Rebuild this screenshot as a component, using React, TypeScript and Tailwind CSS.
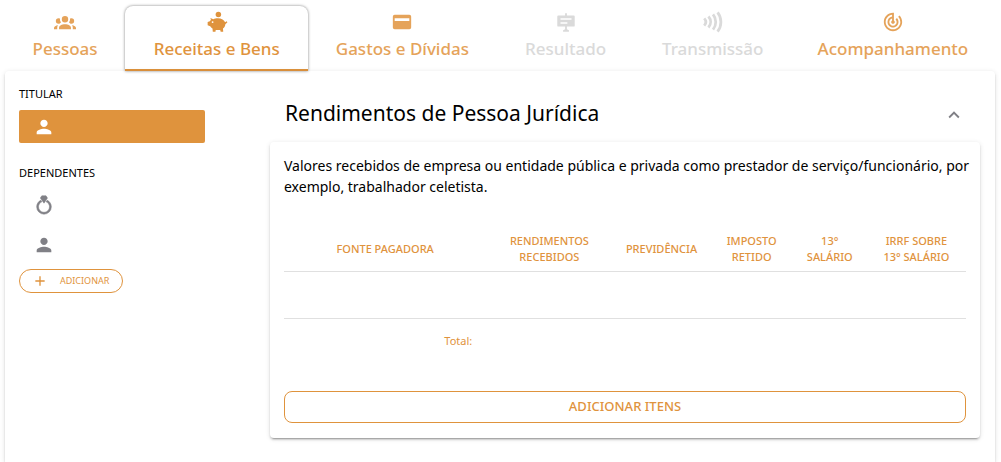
import { useState } from 'react';
import type { ReactNode } from 'react';
import clsx from 'clsx';
import { MdAdd, MdExpandLess, MdPerson, MdTrackChanges } from 'react-icons/md';

interface IconProps {
  className?: string;
}

interface Tab {
  id: string;
  label: string;
  icon: ReactNode;
  disabled?: boolean;
}

function Icon({ className, children }: IconProps & { children: ReactNode }) {
  return (
    <svg viewBox="0 0 24 24" fill="currentColor" aria-hidden="true" className={className}>
      {children}
    </svg>
  );
}

function GroupIcon({ className }: IconProps) {
  return (
    <Icon className={className}>
      <path d="M12,5.5A3.5,3.5 0 0,1 15.5,9A3.5,3.5 0 0,1 12,12.5A3.5,3.5 0 0,1 8.5,9A3.5,3.5 0 0,1 12,5.5M5,8C5.56,8 6.08,8.15 6.53,8.42C6.38,9.85 6.8,11.27 7.66,12.38C7.16,13.34 6.16,14 5,14A3,3 0 0,1 2,11A3,3 0 0,1 5,8M19,8A3,3 0 0,1 22,11A3,3 0 0,1 19,14C17.84,14 16.84,13.34 16.34,12.38C17.2,11.27 17.62,9.85 17.47,8.42C17.92,8.15 18.44,8 19,8M5.5,18.25C5.5,16.18 8.41,14.5 12,14.5C15.59,14.5 18.5,16.18 18.5,18.25V20H5.5V18.25M0,20V18.5C0,17.11 1.89,15.94 4.45,15.6C3.86,16.28 3.5,17.22 3.5,18.25V20H0M24,20H20.5V18.25C20.5,17.22 20.14,16.28 19.55,15.6C22.11,15.94 24,17.11 24,18.5V20Z" />
    </Icon>
  );
}

function PiggyIcon({ className }: IconProps) {
  return (
    <Icon className={className}>
      <circle cx="13.5" cy="3.8" r="3" />
      <path
        fillRule="evenodd"
        d="M4.8 7.6L8 9.1C9.4 8.3 10.9 8 12.8 8C17 8 20 10 20.8 12.4L22.5 11.3L23.4 12.2L21.1 14.4C21 16.4 20 18 18.5 19.2L18.8 22.5H16L15.5 20.6C13.6 20.9 12 20.9 10.6 20.6L10.3 22.5H7.4L7.1 19.2C6 18.5 5.2 17.7 4.6 16.6L1.8 15.6V12L4.2 11.3C4.5 10.7 4.9 10.2 5.4 9.8ZM7.2 11.1A1 1 0 1 0 7.2 13.1A1 1 0 1 0 7.2 11.1Z"
      />
    </Icon>
  );
}

function CardIcon({ className }: IconProps) {
  return (
    <Icon className={className}>
      <path fillRule="evenodd" d="M4 4H20A2 2 0 0 1 22 6V18A2 2 0 0 1 20 20H4A2 2 0 0 1 2 18V6A2 2 0 0 1 4 4ZM4 8V11H20V8Z" />
    </Icon>
  );
}

function BoardIcon({ className }: IconProps) {
  return (
    <Icon className={className}>
      <path
        fillRule="evenodd"
        d="M11 2.5H13V5H20.5A1 1 0 0 1 21.5 6V16A1 1 0 0 1 20.5 17H13V19.8L15.2 21V22.5H8.8V21L11 19.8V17H3.5A1 1 0 0 1 2.5 16V6A1 1 0 0 1 3.5 5H11ZM6 8V9.6H18V8ZM6 12.3V13.9H13.5V12.3Z"
      />
    </Icon>
  );
}

function WavesIcon({ className }: IconProps) {
  return (
    <svg viewBox="0 0 24 24" fill="none" stroke="currentColor" strokeWidth="3" aria-hidden="true" className={className}>
      <path d="M2.4 8C4.6 10.4 4.6 13.6 2.4 16M7 6C10.2 9.6 10.2 14.4 7 18M12 3.8C16 8.6 16 15.4 12 20.2M17 1.6C21.8 7.6 21.8 16.4 17 22.4" />
    </svg>
  );
}

function RingIcon({ className }: IconProps) {
  return (
    <Icon className={className}>
      <path
        stroke="currentColor"
        strokeWidth="0.6"
        d="M12,10L8,4.4L9.6,2H14.2L15.8,4.4L12,10M15.5,6.8L14.3,8.5C16.5,9.4 18,11.5 18,14A6,6 0 0,1 12,20A6,6 0 0,1 6,14C6,11.5 7.6,9.4 9.7,8.5L8.5,6.8C5.8,8.1 4,10.8 4,14A8,8 0 0,0 12,22A8,8 0 0,0 20,14C20,10.8 18.2,8.1 15.5,6.8Z"
      />
    </Icon>
  );
}

const iconSize = 'size-[22px]';

const tabs: Tab[] = [
  { id: 'pessoas', label: 'Pessoas', icon: <GroupIcon className={iconSize} /> },
  { id: 'receitas', label: 'Receitas e Bens', icon: <PiggyIcon className={iconSize} /> },
  { id: 'gastos', label: 'Gastos e Dívidas', icon: <CardIcon className={iconSize} /> },
  { id: 'resultado', label: 'Resultado', icon: <BoardIcon className={iconSize} />, disabled: true },
  { id: 'transmissao', label: 'Transmissão', icon: <WavesIcon className={iconSize} />, disabled: true },
  { id: 'acompanhamento', label: 'Acompanhamento', icon: <MdTrackChanges className={iconSize} /> },
];

const columns = [
  { label: 'FONTE PAGADORA', width: 'w-[202px]' },
  { label: 'RENDIMENTOS RECEBIDOS', width: 'w-[126px]' },
  { label: 'PREVIDÊNCIA', width: 'w-[98px]' },
  { label: 'IMPOSTO RETIDO', width: 'w-[82px]' },
  { label: '13° SALÁRIO', width: 'w-[74px]' },
  { label: 'IRRF SOBRE 13° SALÁRIO', width: 'w-[99px]' },
];

const elevation =
  'shadow-[0_3px_1px_-2px_rgba(0,0,0,0.2),0_2px_2px_0_rgba(0,0,0,0.14),0_1px_5px_0_rgba(0,0,0,0.12)]';

function TabBar({ active, onSelect }: { active: string; onSelect: (id: string) => void }) {
  return (
    <nav className="grid grid-cols-[120fr_183fr_188fr_138fr_156fr_204fr] pt-1.5">
      {tabs.map((tab) => (
        <button
          key={tab.id}
          type="button"
          disabled={tab.disabled}
          aria-current={tab.id === active ? 'page' : undefined}
          onClick={() => onSelect(tab.id)}
          className={clsx(
            'flex h-[65px] flex-col items-center gap-1 border-b-2 pt-[5px] text-[17px] leading-6 font-medium whitespace-nowrap',
            tab.id === active
              ? 'rounded-t-lg border-[#df933d] bg-white text-[#df933d] shadow-[0_0_3px_rgba(0,0,0,0.5)]'
              : 'border-transparent',
            tab.id !== active && (tab.disabled ? 'text-[#dadada]' : 'text-[#e5a35a]')
          )}
        >
          {tab.icon}
          {tab.label}
        </button>
      ))}
    </nav>
  );
}

function Sidebar() {
  return (
    <aside className="w-[186px] shrink-0 pt-[15px] text-[11px] leading-4 text-black">
      <h2>TITULAR</h2>
      <button type="button" aria-label="Titular" className="mt-2 flex h-[33px] w-full items-center rounded-xs bg-[#df933d] px-3.5 text-white">
        <MdPerson className={iconSize} />
      </button>
      <h2 className="mt-[22px]">DEPENDENTES</h2>
      <ul className="mt-1 text-[#808086]">
        <li>
          <button type="button" aria-label="Cônjuge" className="flex h-10 w-full items-center px-3.5">
            <RingIcon className={iconSize} />
          </button>
        </li>
        <li>
          <button type="button" aria-label="Dependente" className="flex h-10 w-full items-center px-3.5">
            <MdPerson className={iconSize} />
          </button>
        </li>
      </ul>
      <button type="button" className="mt-1 flex h-6 w-[104px] items-center gap-3 rounded-full border border-[#df933d] pl-3 text-[9px] text-[#df933d]">
        <MdAdd className="size-4" />
        ADICIONAR
      </button>
    </aside>
  );
}

function IncomeTable() {
  return (
    <table className="mt-[30px] w-full table-fixed text-[11px] leading-4 text-[#df933d]">
      <thead>
        <tr className="border-b border-[#e0e0e0]">
          {columns.map((column) => (
            <th key={column.label} scope="col" className={clsx('px-3 py-1.5 font-medium', column.width)}>
              {column.label}
            </th>
          ))}
        </tr>
      </thead>
      <tbody>
        <tr className="h-[47px] border-b border-[#e0e0e0]">
          {columns.map((column) => (
            <td key={column.label} />
          ))}
        </tr>
      </tbody>
      <tfoot>
        <tr className="h-11">
          <td className="px-3.5 text-right">Total:</td>
          <td colSpan={5} />
        </tr>
      </tfoot>
    </table>
  );
}

function IncomeSection() {
  const [open, setOpen] = useState(true);

  return (
    <section className="min-w-0 flex-1">
      <button
        type="button"
        aria-expanded={open}
        onClick={() => setOpen(!open)}
        className="flex h-[71px] w-full items-center justify-between px-[15px] pt-4 text-black"
      >
        <span className="pb-1 text-[21px] leading-8">Rendimentos de Pessoa Jurídica</span>
        <MdExpandLess className={clsx('size-[22px] text-[#808086]', !open && 'rotate-180')} />
      </button>
      {open && (
        <div className={clsx('rounded-sm bg-white px-3.5 pt-[13px] pb-[15px]', elevation)}>
          <p className="-mr-2 text-sm leading-[21px] text-black">
            Valores recebidos de empresa ou entidade pública e privada como prestador de serviço/funcionário, por
            exemplo, trabalhador celetista.
          </p>
          <IncomeTable />
          <button
            type="button"
            className="mt-7 h-8 w-full rounded-lg border border-[#df933d] text-[13px] font-medium text-[#df933d]"
          >
            ADICIONAR ITENS
          </button>
        </div>
      )}
    </section>
  );
}

export default function App() {
  const [active, setActive] = useState('receitas');

  return (
    <div className="flex min-h-screen flex-col bg-white pr-1.5 pl-[5px] font-['Noto_Sans','Open_Sans',sans-serif]">
      <TabBar active={active} onSelect={setActive} />
      <main className={clsx('flex flex-1 gap-[65px] rounded-t-sm pr-[15px] pl-3.5', elevation)}>
        <Sidebar />
        <IncomeSection />
      </main>
    </div>
  );
}
